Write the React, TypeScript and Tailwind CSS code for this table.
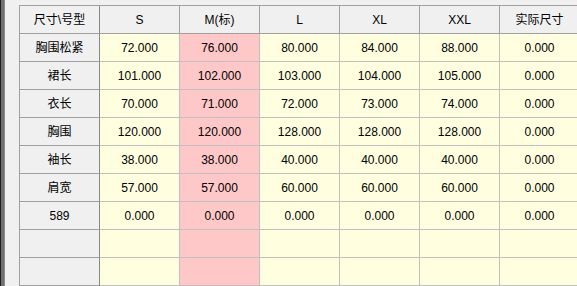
import React from "react";

const headers = ["尺寸\\号型", "S", "M(标)", "L", "XL", "XXL", "实际尺寸"];
const rows: string[][] = [
  ["胸围松紧", "72.000", "76.000", "80.000", "84.000", "88.000", "0.000"],
  ["裙长", "101.000", "102.000", "103.000", "104.000", "105.000", "0.000"],
  ["衣长", "70.000", "71.000", "72.000", "73.000", "74.000", "0.000"],
  ["胸围", "120.000", "120.000", "128.000", "128.000", "128.000", "0.000"],
  ["袖长", "38.000", "38.000", "40.000", "40.000", "40.000", "0.000"],
  ["肩宽", "57.000", "57.000", "60.000", "60.000", "60.000", "0.000"],
  ["589", "0.000", "0.000", "0.000", "0.000", "0.000", "0.000"],
  ["", "", "", "", "", "", ""],
  ["", "", "", "", "", "", ""],
];

export default function App() {
  return (
    <div
      className="w-[577px] h-[286px] bg-[#f0f0f0] flex overflow-hidden text-[12px] text-black"
      style={{ fontFamily: '"Liberation Sans", "Noto Sans CJK SC", sans-serif' }}
    >
      <div className="w-px h-full bg-[#1e1e1e] shrink-0" />
      <div className="w-[3px] h-full bg-[#6f6f6f] shrink-0" />
      <div className="w-px h-full bg-[#8a8a8a] shrink-0" />
      <div className="pl-[14px] pt-[5px] shrink-0">
        <div className="border-l border-t border-[#a0a0a0] grid grid-cols-[repeat(7,80px)] auto-rows-[28px]">
          {headers.map((h, i) => (
            <div
              key={"h" + i}
              className={
                "flex items-center justify-center bg-[#f0f0f0] border-b border-r " +
                (i === 0 ? "border-r-[#888888] border-b-[#a0a0a0]" : "border-[#a0a0a0]")
              }
            >
              {h}
            </div>
          ))}
          {rows.map((r, ri) =>
            r.map((c, ci) => (
              <div
                key={ri + "-" + ci}
                className={
                  "flex items-center justify-center border-b border-r " +
                  (ci === 0
                    ? "bg-[#f0f0f0] border-b-[#a0a0a0] border-r-[#888888]"
                    : ci === 2
                    ? "bg-[#ffc8c8] border-[#c0c0c0]"
                    : "bg-[#ffffe0] border-[#c0c0c0]")
                }
              >
                {c}
              </div>
            ))
          )}
        </div>
      </div>
    </div>
  );
}
